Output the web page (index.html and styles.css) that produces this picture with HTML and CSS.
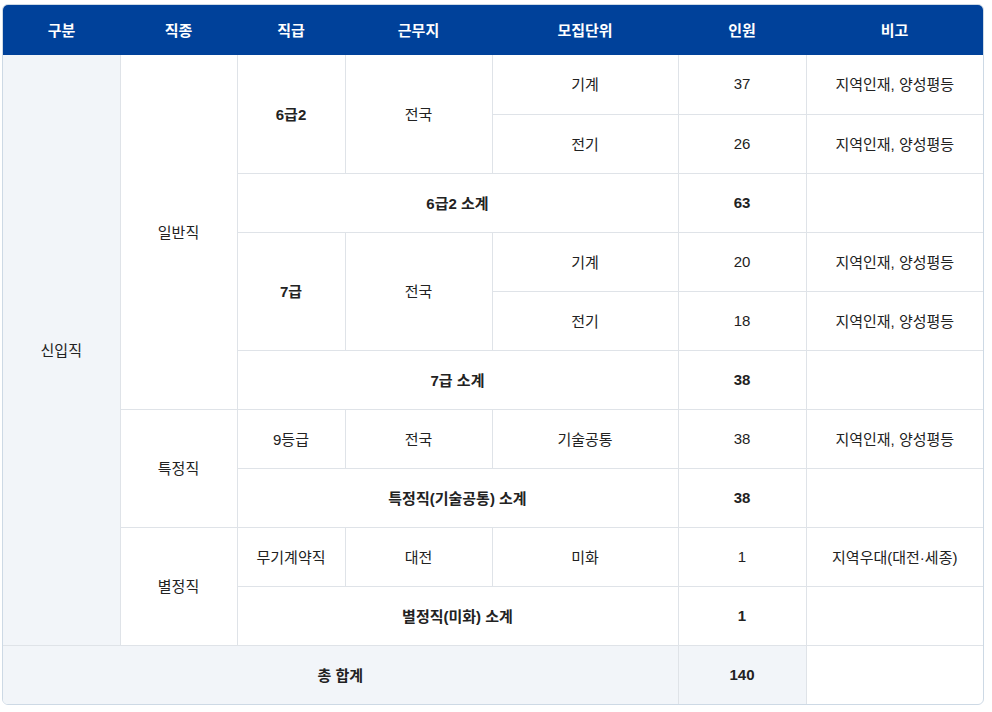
FILE: index.html
```html
<!DOCTYPE html>
<html lang="ko">
<head>
<meta charset="utf-8">
<link rel="stylesheet" href="styles.css">
</head>
<body>
<div class="table-wrap">
  <table class="recruit">
    <colgroup>
      <col class="c1"><col class="c2"><col class="c3"><col class="c4"><col class="c5"><col class="c6"><col class="c7">
    </colgroup>
    <thead>
      <tr>
        <th>구분</th><th>직종</th><th>직급</th><th>근무지</th><th>모집단위</th><th>인원</th><th>비고</th>
      </tr>
    </thead>
    <tbody>
      <tr>
        <td rowspan="11" class="shade">신입직</td>
        <td rowspan="6">일반직</td>
        <td rowspan="2" class="bold">6급2</td>
        <td rowspan="2">전국</td>
        <td>기계</td><td>37</td><td>지역인재, 양성평등</td>
      </tr>
      <tr><td>전기</td><td>26</td><td>지역인재, 양성평등</td></tr>
      <tr><td colspan="3" class="bold">6급2 소계</td><td class="bold">63</td><td></td></tr>
      <tr>
        <td rowspan="2" class="bold">7급</td>
        <td rowspan="2">전국</td>
        <td>기계</td><td>20</td><td>지역인재, 양성평등</td>
      </tr>
      <tr><td>전기</td><td>18</td><td>지역인재, 양성평등</td></tr>
      <tr><td colspan="3" class="bold">7급 소계</td><td class="bold">38</td><td></td></tr>
      <tr>
        <td rowspan="2">특정직</td>
        <td>9등급</td><td>전국</td><td>기술공통</td><td>38</td><td>지역인재, 양성평등</td>
      </tr>
      <tr><td colspan="3" class="bold">특정직(기술공통) 소계</td><td class="bold">38</td><td></td></tr>
      <tr>
        <td rowspan="2">별정직</td>
        <td>무기계약직</td><td>대전</td><td>미화</td><td>1</td><td>지역우대(대전·세종)</td>
      </tr>
      <tr><td colspan="3" class="bold">별정직(미화) 소계</td><td class="bold">1</td><td></td></tr>
    </tbody>
    <tfoot>
      <tr>
        <td colspan="5" class="shade bold">총 합계</td>
        <td class="shade bold">140</td>
        <td></td>
      </tr>
    </tfoot>
  </table>
</div>
</body>
</html>
```
FILE: styles.css
```css
html, body {
  margin: 0;
  padding: 0;
  background: #ffffff;
}

body {
  padding: 4px 8px 0 2px;
  font-family: "Liberation Sans", "Noto Sans CJK KR", sans-serif;
  color: #222222;
}

.table-wrap {
  width: 980px;
  border: 1px solid #cdd9e5;
  border-radius: 6px;
  overflow: hidden;
}

.recruit {
  width: 980px;
  table-layout: fixed;
  border-collapse: collapse;
  border-style: hidden;
  font-size: 15px;
}

.c1 { width: 117px; }
.c2 { width: 117px; }
.c3 { width: 108px; }
.c4 { width: 147px; }
.c5 { width: 186px; }
.c6 { width: 128px; }
.c7 { width: 177px; }

.recruit th {
  background: #00419a;
  color: #ffffff;
  font-weight: 700;
  height: 48px;
  padding: 0 0 1px;
  text-align: center;
  vertical-align: middle;
  border: none;
  border-bottom: 1px solid #00419a;
}

.recruit td {
  height: 56px;
  padding: 0 0 2px;
  text-align: center;
  vertical-align: middle;
  border: 1px solid #dfe3e8;
  font-weight: 400;
}

.recruit tbody tr:first-child td:nth-last-child(-n+3) {
  height: 57px;
}

.recruit td.bold {
  font-weight: 700;
}

.recruit td.shade {
  background: #f2f5f9;
}
```
